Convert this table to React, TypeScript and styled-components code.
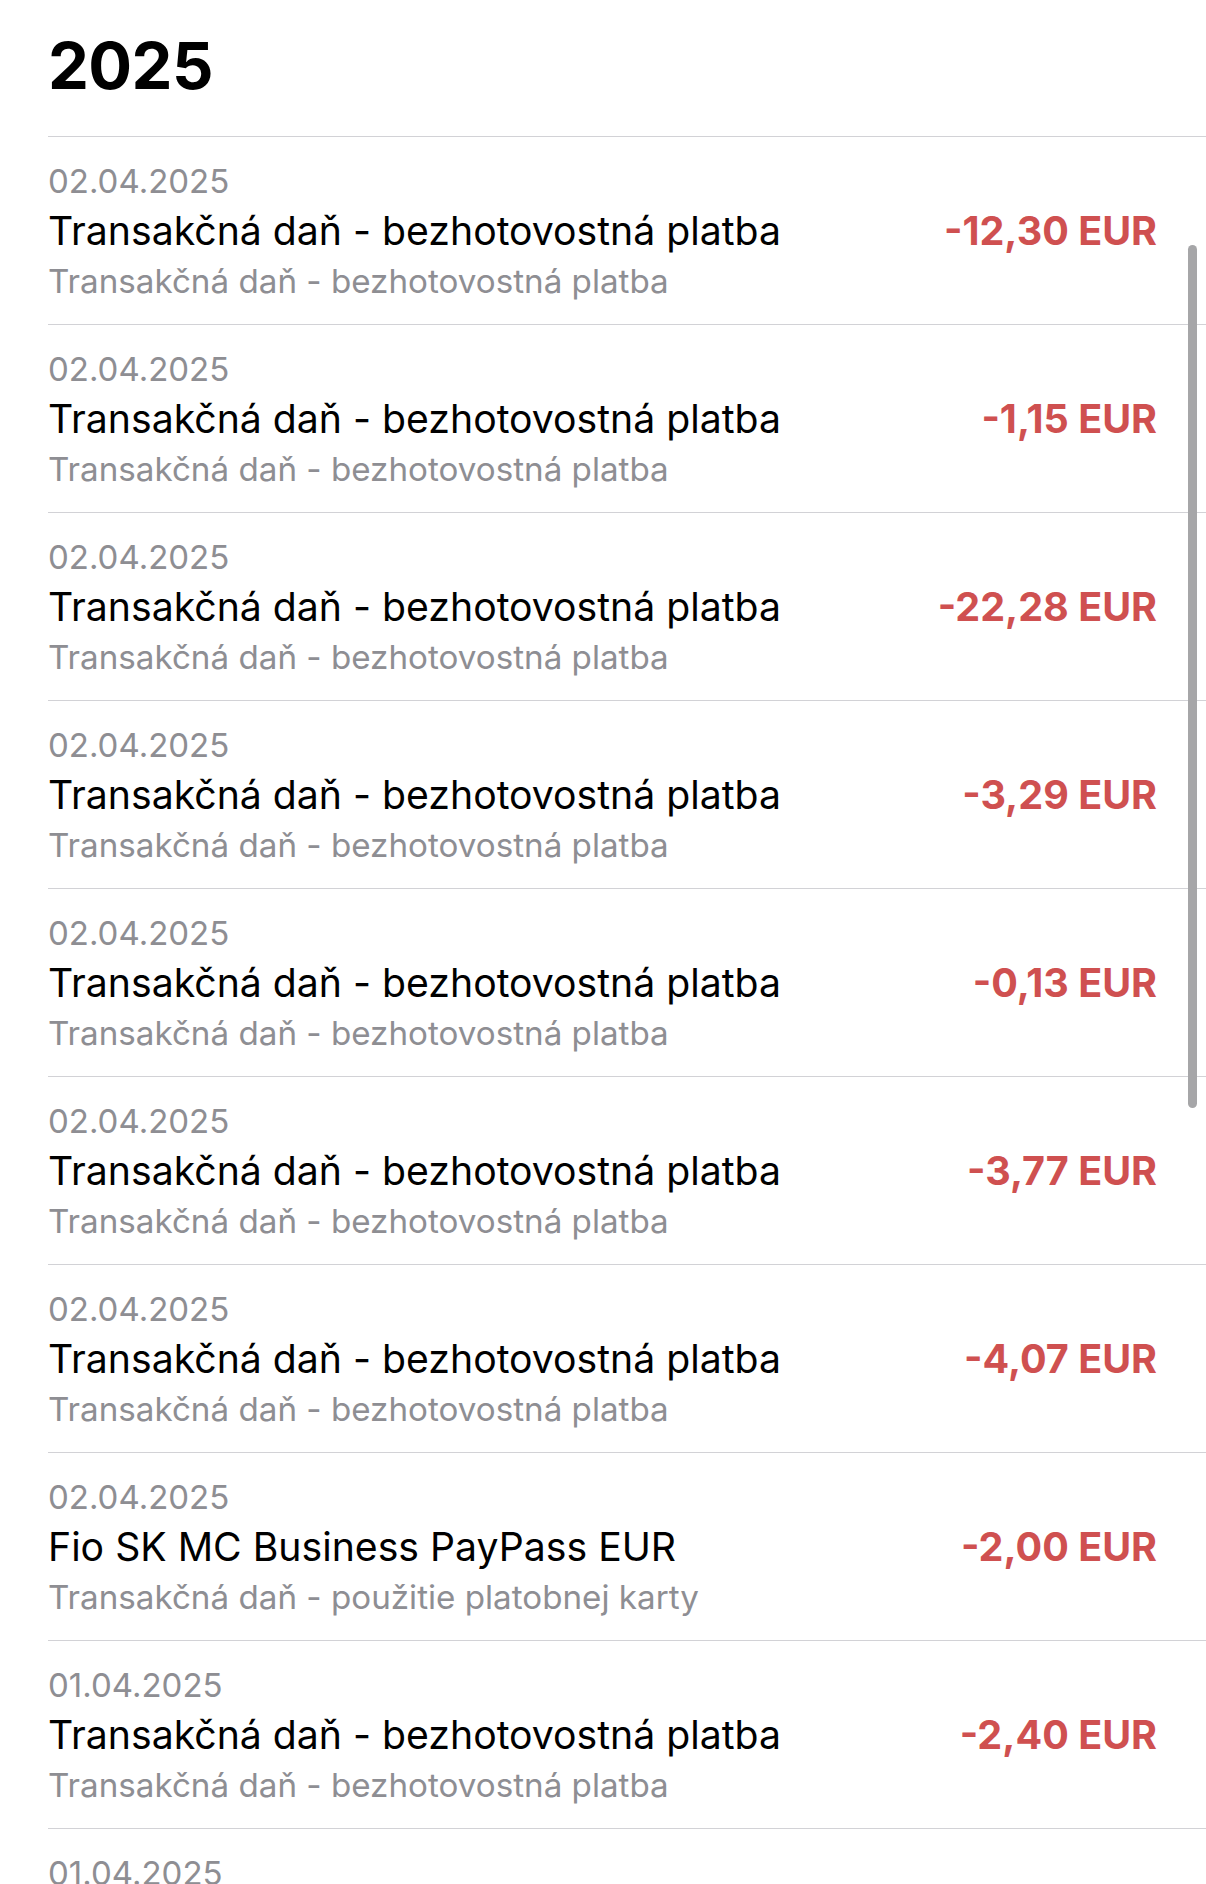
import React from 'react';
import styled, { createGlobalStyle } from 'styled-components';

const GlobalStyle = createGlobalStyle`
  html, body {
    margin: 0;
    padding: 0;
    background: #ffffff;
  }

  body {
    font-family: Inter, 'Noto Sans', 'Liberation Sans', sans-serif;
    -webkit-font-smoothing: antialiased;
  }
`;

const Screen = styled.div`
  position: relative;
  width: 1206px;
  height: 1884px;
  overflow: hidden;
  background: #ffffff;
`;

const Year = styled.h1`
  margin: 0;
  padding: 24px 0 28px 48px;
  font-size: 65px;
  line-height: 84px;
  font-weight: 700;
  color: #000000;
  letter-spacing: -0.6px;
`;

const List = styled.div`
  margin-left: 48px;
`;

const Row = styled.div`
  display: grid;
  grid-template-columns: 1fr auto;
  grid-template-areas:
    'date .'
    'title amount'
    'note .';
  padding: 20px 49px 19px 0;
  border-top: 1px solid #d2d2d6;
`;

const DateText = styled.div`
  grid-area: date;
  font-size: 33px;
  line-height: 48px;
  color: #8e8e93;
`;

const Title = styled.div`
  grid-area: title;
  font-size: 39.2px;
  line-height: 52px;
  color: #000000;
`;

const Note = styled.div`
  grid-area: note;
  font-size: 33.2px;
  line-height: 48px;
  color: #8e8e93;
`;

const Amount = styled.div<{ negative: boolean }>`
  grid-area: amount;
  font-size: 39.5px;
  line-height: 52px;
  font-weight: 700;
  color: ${p => (p.negative ? '#cf5050' : '#2f9e4f')};
  text-align: right;
  white-space: nowrap;
`;

const ScrollThumb = styled.div`
  position: absolute;
  top: 245px;
  right: 9px;
  width: 9px;
  height: 863px;
  border-radius: 5px;
  background: #a6a6a8;
`;

interface ITransaction {
  date: string;
  title: string;
  note: string;
  amount: string;
}

const TAX = 'Transakčná daň - bezhotovostná platba';

const transactions: ITransaction[] = [
  { date: '02.04.2025', title: TAX, note: TAX, amount: '-12,30' },
  { date: '02.04.2025', title: TAX, note: TAX, amount: '-1,15' },
  { date: '02.04.2025', title: TAX, note: TAX, amount: '-22,28' },
  { date: '02.04.2025', title: TAX, note: TAX, amount: '-3,29' },
  { date: '02.04.2025', title: TAX, note: TAX, amount: '-0,13' },
  { date: '02.04.2025', title: TAX, note: TAX, amount: '-3,77' },
  { date: '02.04.2025', title: TAX, note: TAX, amount: '-4,07' },
  {
    date: '02.04.2025',
    title: 'Fio SK MC Business PayPass EUR',
    note: 'Transakčná daň - použitie platobnej karty',
    amount: '-2,00'
  },
  { date: '01.04.2025', title: TAX, note: TAX, amount: '-2,40' },
  { date: '01.04.2025', title: TAX, note: TAX, amount: '-1,86' }
];

const App = () => (
  <Screen>
    <GlobalStyle />
    <Year>2025</Year>

    <List>
      {transactions.map((t, i) => (
        <Row key={i}>
          <DateText>{t.date}</DateText>
          <Title>{t.title}</Title>
          <Note>{t.note}</Note>
          <Amount negative={t.amount.startsWith('-')}>{t.amount} EUR</Amount>
        </Row>
      ))}
    </List>

    <ScrollThumb />
  </Screen>
);

export default App;
